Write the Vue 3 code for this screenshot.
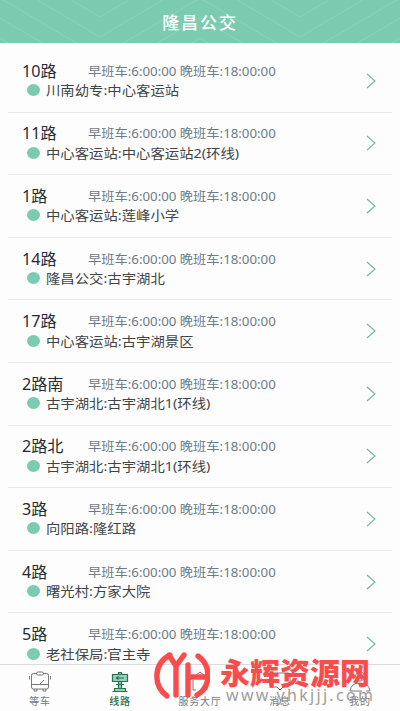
<script setup>
const routes = [
  ['10路', '川南幼专:中心客运站'],
  ['11路', '中心客运站:中心客运站2(环线)'],
  ['1路', '中心客运站:莲峰小学'],
  ['14路', '隆昌公交:古宇湖北'],
  ['17路', '中心客运站:古宇湖景区'],
  ['2路南', '古宇湖北:古宇湖北1(环线)'],
  ['2路北', '古宇湖北:古宇湖北1(环线)'],
  ['3路', '向阳路:隆红路'],
  ['4路', '曙光村:方家大院'],
  ['5路', '老社保局:官主寺'],
]
const waves = [-3, 17, 37, 57, 77, 97]
</script>

<template>
  <main class="app">
    <header class="header">
      <svg class="waves" viewBox="0 0 400 43" aria-hidden="true">
        <path v-for="y in waves" :key="y" :d="`M0 ${y - 59}L100 ${y}L200 ${y - 59}L300 ${y}L400 ${y - 59}`" />
      </svg>
      <h1>隆昌公交</h1>
    </header>
    <section class="list">
      <article v-for="[name, stops] in routes" :key="name" class="row">
        <div class="info">
          <div class="top">
            <div class="name"><span>{{ name }}</span></div>
            <div class="time"><span>早班车:6:00:00 晚班车:18:00:00</span></div>
          </div>
          <div class="stops"><i class="dot"></i><span>{{ stops }}</span></div>
        </div>
        <svg class="arrow" viewBox="0 0 10 16"><path d="M1 1L9 8L1 15" /></svg>
      </article>
    </section>
    <nav class="tabs">
      <div class="tab">
        <svg viewBox="0 0 24 22"><rect x="3.5" y="2.5" width="17" height="15.5" rx="2" /><rect x="8.5" y="1" width="7" height="3" rx="1.5" class="fill" /><path d="M4 13.5H20M12 13L16 9M1.5 5V8.5M22.5 5V8.5M6 18V20H9V18M15 18V20H18V18" /></svg>
        <span>等车</span>
      </div>
      <div class="tab active">
        <svg viewBox="0 0 24 22"><path d="M10.5 3V1.5H13.5V3M4.5 3.5H19.5V10.5H4.5ZM10.5 11V17.5H13.5V11M8 13.5H16M6.5 20V17.5H17.5V20M4.5 20.5H19.5" /><path d="M16 7H8.5M10.5 5.5L8.5 7L10.5 8.5" /></svg>
        <span>线路</span>
      </div>
      <div class="tab">
        <svg viewBox="0 0 24 22"><path d="M2 9L12 1L22 9M5 9V19M19 9V19M5 19H8M14 16H18V19" /></svg>
        <span>服务大厅</span>
      </div>
      <div class="tab">
        <svg viewBox="0 0 24 22"><path d="M4 2H20Q22 2 22 4V13Q22 15 20 16H15L12 19L9 16H4Q2 15 2 13V4Q2 2 4 2" /></svg>
        <span>消息</span>
      </div>
      <div class="tab">
        <svg viewBox="0 0 24 22"><circle cx="12" cy="5.5" r="4.5" /><path d="M2 20H14M18 20H22Q21 12 12 12Q3 12 2 20" /></svg>
        <span>我的</span>
      </div>
    </nav>
    <div class="mark">
      <svg class="logo" viewBox="0 0 56 50"><path d="M16 5C-1 14 -1 36 13 46M15 5L22 16L30 5M22 15V45M34 15V45M34 27H52M44 6C58 16 57 37 43 45" /></svg>
      <strong>永辉资源网</strong>
      <em>www.yhkjjj.com</em>
    </div>
  </main>
</template>

<style>
body { margin: 0; overflow: hidden; }
</style>
<style scoped>
* { box-sizing: border-box; }
.app { position: relative; width: 400px; height: 711px; overflow: hidden; display: flex; flex-direction: column; background: #fdfdfd; font-family: "Noto Sans", "Noto Sans CJK SC", sans-serif; }
.header { position: relative; flex: none; height: 43px; background: #7bcbb0; display: flex; align-items: center; justify-content: center; }
.waves { position: absolute; inset: 0; width: 400px; height: 43px; fill: none; stroke: #8dd4bc; stroke-width: .9; }
h1 { position: relative; margin: 0; padding-top: 1px; color: #fff; font: 500 17px/24px "Noto Sans CJK SC", serif; letter-spacing: 1.9px; }
.list { height: 621px; flex: none; overflow: hidden; padding: 7px 8px 0; }
.row { height: 62.6px; display: flex; align-items: center; padding: 0 16px 0 14px; border-bottom: 1px solid #e8e9e9; }
.info { flex: 1; min-width: 0; }
.top { display: flex; align-items: center; height: 19px; }
.name { width: 66px; }
span { display: inline-block; white-space: nowrap; }
.name span { font-size: 15.5px; line-height: 19px; color: #1f2c36; transform: scaleX(1.04); transform-origin: left; }
.time span { position: relative; top: -1px; font-size: 12px; line-height: 19px; color: #6c7b86; transform: scaleX(1.105); transform-origin: left; }
.stops { display: flex; align-items: center; height: 20px; padding-left: 5px; }
.dot { flex: none; width: 13px; height: 12px; border-radius: 50%; background: #7bcbb0; margin-right: 6px; }
.stops span { font-size: 13px; line-height: 20px; color: #3f4548; transform: scaleX(1.105); transform-origin: left; }
.arrow { width: 10px; height: 16px; fill: none; stroke: #6fb9a0; stroke-width: 1.1; }
.tabs { flex: none; height: 47px; display: grid; grid-template-columns: repeat(5, 1fr); border-top: 1px solid #d8dcdc; }
.tab { display: flex; flex-direction: column; align-items: center; padding-top: 6px; color: #777; }
.tab svg { width: 24px; height: 22px; fill: none; stroke: currentColor; stroke-width: 1; }
.tab .fill { fill: #fdfdfd; }
.tab span { font: 10px/15px "Noto Sans CJK SC", serif; letter-spacing: .8px; }
.tab.active { color: #28704f; }
.tab.active svg { fill: #8fd6b8; stroke-width: 1.2; }
.tab.active span { font-weight: 500; }
.mark { position: absolute; left: 154px; top: 650px; width: 225px; height: 54px; opacity: .95; }
.logo { position: absolute; left: 0; top: 0; width: 56px; height: 50px; fill: none; stroke: #f94444; stroke-width: 5.4; stroke-linecap: round; }
strong { position: absolute; left: 66px; top: 4px; color: #f94444; font: 900 30px/34px "Noto Sans CJK SC", sans-serif; white-space: nowrap; }
em { position: absolute; left: 72px; top: 35px; color: #999; font: 16px/20px "Noto Sans", sans-serif; letter-spacing: 2.3px; }
</style>
